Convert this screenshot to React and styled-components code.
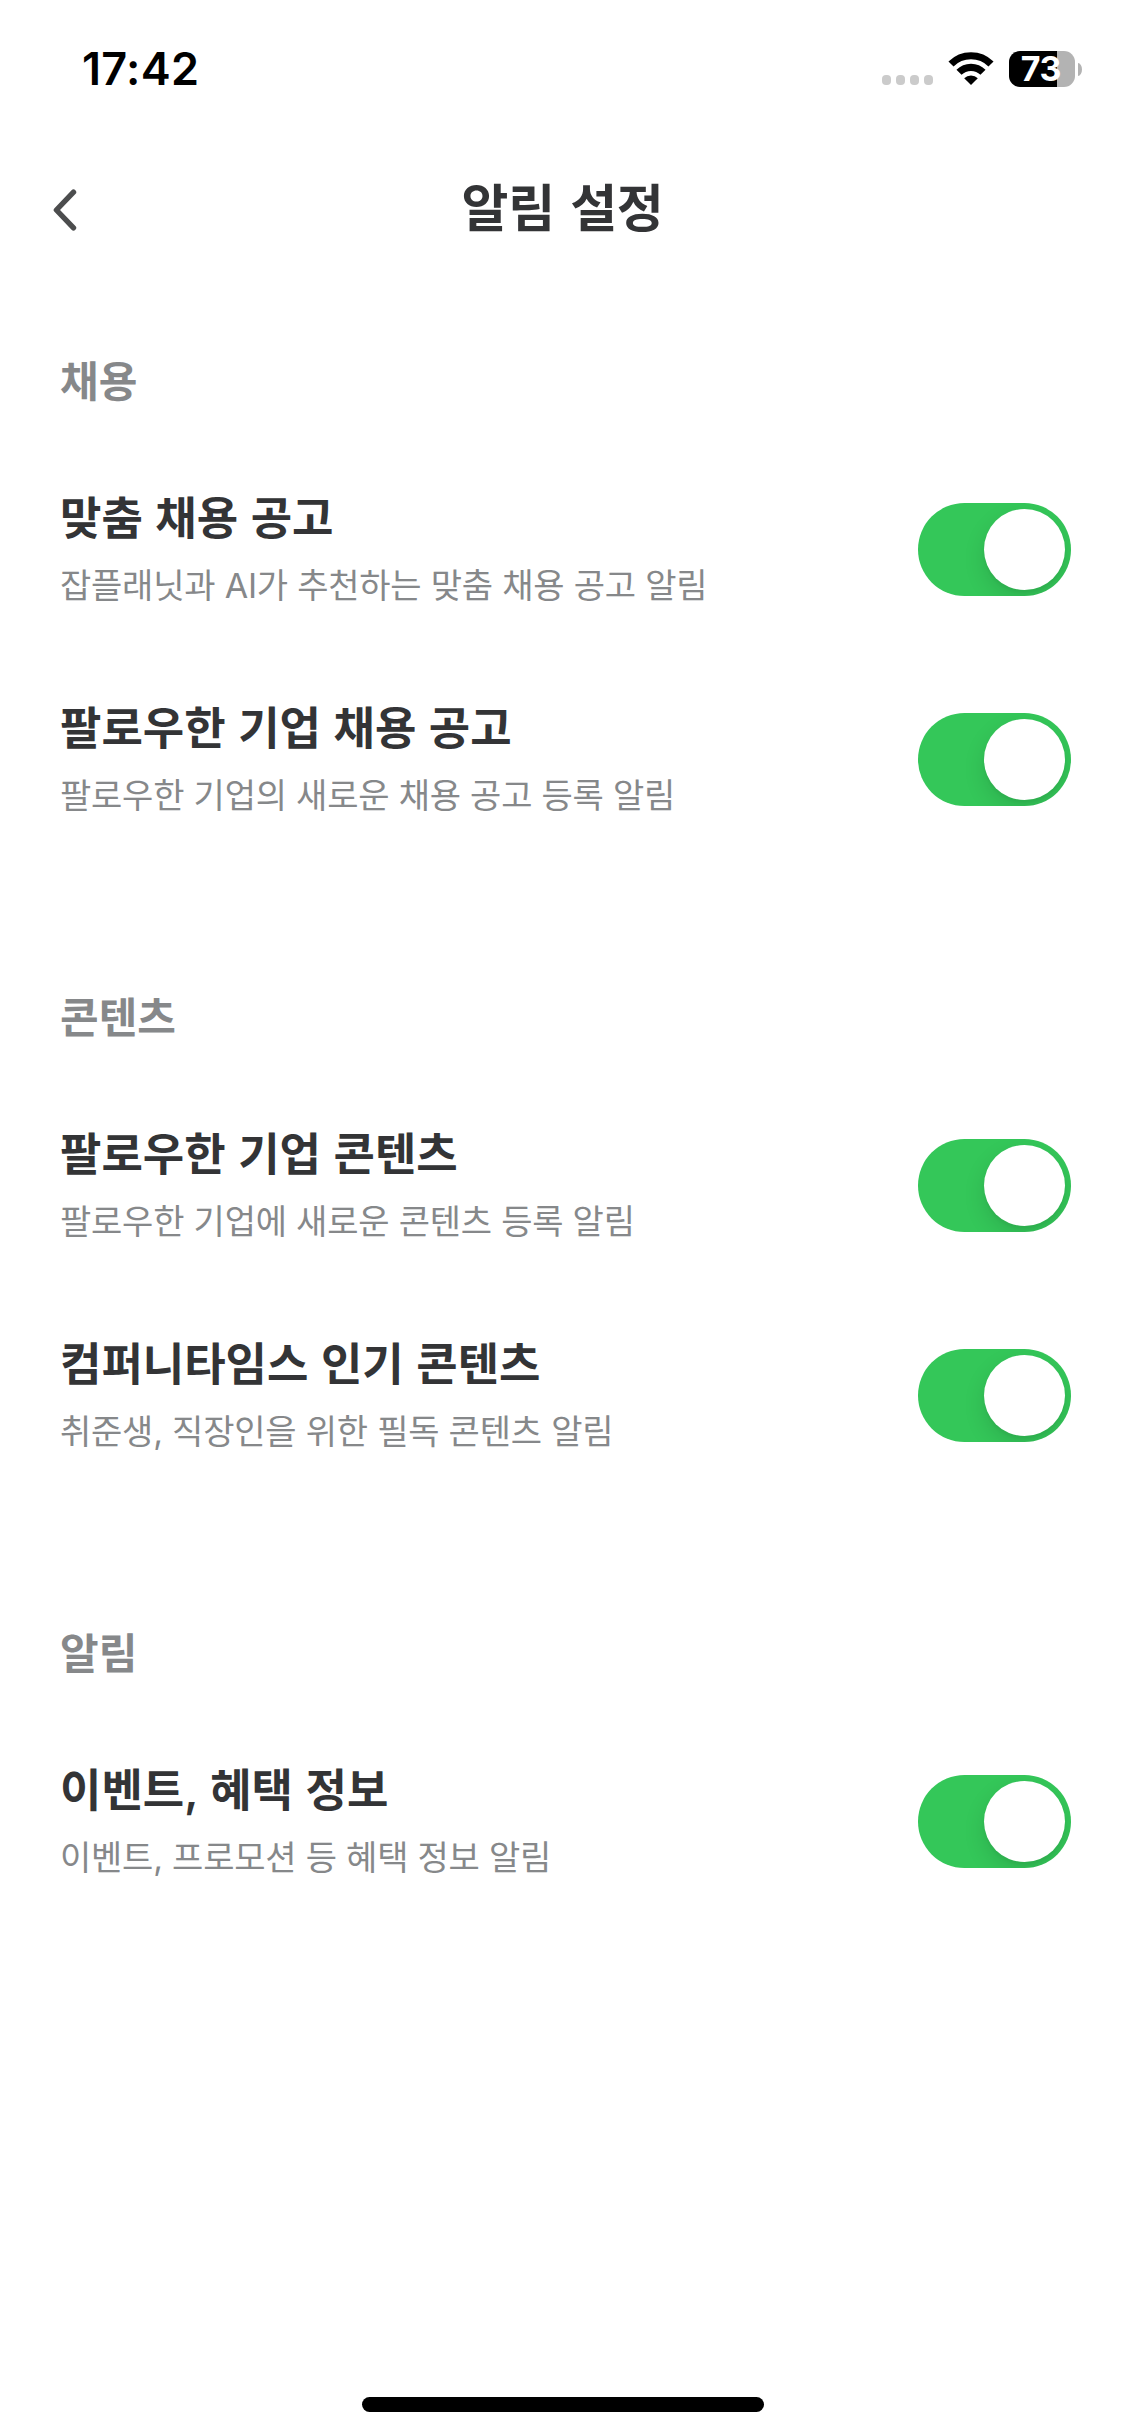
import React, { useState } from "react";
import styled, { createGlobalStyle } from "styled-components";

const GlobalStyle = createGlobalStyle`
  *, *::before, *::after { box-sizing: border-box; }
  body { margin: 0; background: #fff; }
`;

const Screen = styled.div`
  width: 1125px;
  height: 2436px;
  display: flex;
  flex-direction: column;
  background: #fff;
  color: #333436;
  font-family: Inter, "Noto Sans CJK KR", sans-serif;
  overflow: hidden;
`;

const StatusBar = styled.div`
  height: 132px;
  flex: none;
  display: flex;
  justify-content: space-between;
  padding: 0 43px 0 82px;
`;

const Clock = styled.time`
  margin-top: 40px;
  color: #000;
  font-size: 45px;
  line-height: 58px;
  font-weight: 600;
  letter-spacing: 0.3px;
`;

const StatusIcons = styled.div`
  display: flex;
  height: 36px;
  margin-top: 51px;
`;

const SignalDots = styled.div`
  display: flex;
  gap: 5px;
  margin: 24px 15px 0 0;
`;

const Dot = styled.span`
  width: 9px;
  height: 10px;
  border-radius: 4px;
  background: #cbcbcb;
`;

const WifiIcon = styled.svg`
  width: 46px;
  height: 34px;
  margin-right: 15px;
`;

const Battery = styled.div`
  display: flex;
  align-items: center;
  gap: 3px;
`;

const BatteryBody = styled.div`
  width: 66px;
  height: 36px;
  border-radius: 11px;
  display: flex;
  align-items: center;
  justify-content: center;
  background: linear-gradient(90deg, #000 ${(p) => p.$level}%, #b3b3b3 ${(p) => p.$level}%);
  color: #fff;
  font-size: 34px;
  line-height: 36px;
  font-weight: 700;
  letter-spacing: -0.4px;
  padding-right: 2px;
`;

const BatteryCap = styled.span`
  width: 4px;
  height: 13px;
  border-radius: 0 4px 4px 0 / 0 6.5px 6.5px 0;
  background: #b3b3b3;
`;

const Header = styled.header`
  height: 156px;
  flex: none;
  display: grid;
  grid-template-columns: 130px 1fr 130px;
  align-items: center;
`;

const BackButton = styled.button`
  border: 0;
  padding: 0 0 0 50px;
  background: none;
  display: flex;
`;

const HeaderTitle = styled.h1`
  margin: 0 0 2px;
  text-align: center;
  font-size: 51px;
  line-height: 70px;
  font-weight: 700;
  letter-spacing: -0.3px;
  word-spacing: 3.5px;
`;

const Content = styled.main`
  flex: 1;
  display: flex;
  flex-direction: column;
  gap: 124px;
  padding: 64px 54px 0 60px;
`;

const Section = styled.section`
  display: flex;
  flex-direction: column;
`;

const SectionTitle = styled.h2`
  margin: 0 0 32px;
  color: #86888a;
  font-size: 42px;
  line-height: 60px;
  font-weight: 600;
`;

const Row = styled.div`
  height: 210px;
  display: flex;
  align-items: center;
  justify-content: space-between;
`;

const Copy = styled.div`
  display: flex;
  flex-direction: column;
  gap: 13px;
`;

const RowTitle = styled.h3`
  margin: 0;
  font-size: 45px;
  line-height: 60px;
  font-weight: 600;
  word-spacing: 1.2px;
`;

const RowDescription = styled.p`
  margin: 0;
  color: #86888a;
  font-size: 34px;
  line-height: 48px;
  font-weight: 400;
  letter-spacing: -0.22px;
`;

const Switch = styled.button`
  width: 153px;
  height: 93px;
  flex: none;
  border: 0;
  border-radius: 47px;
  padding: 6px;
  display: flex;
  justify-content: ${(p) => (p.$on ? "flex-end" : "flex-start")};
  background: ${(p) => (p.$on ? "#34c759" : "#e9e9ea")};
  overflow: hidden;
`;

const Knob = styled.span`
  width: 81px;
  height: 81px;
  border-radius: 50%;
  background: #fff;
  box-shadow: 0 9px 22px rgba(0, 0, 0, 0.12), 0 3px 3px rgba(0, 0, 0, 0.04);
`;

const HomeArea = styled.footer`
  height: 39px;
  flex: none;
  display: flex;
  justify-content: center;
`;

const HomeIndicator = styled.span`
  width: 402px;
  height: 15px;
  border-radius: 8px;
  background: #000;
`;

const groups = [
  {
    title: "채용",
    items: [
      ["맞춤 채용 공고", "잡플래닛과 AI가 추천하는 맞춤 채용 공고 알림"],
      ["팔로우한 기업 채용 공고", "팔로우한 기업의 새로운 채용 공고 등록 알림"],
    ],
  },
  {
    title: "콘텐츠",
    items: [
      ["팔로우한 기업 콘텐츠", "팔로우한 기업에 새로운 콘텐츠 등록 알림"],
      ["컴퍼니타임스 인기 콘텐츠", "취준생, 직장인을 위한 필독 콘텐츠 알림"],
    ],
  },
  {
    title: "알림",
    items: [["이벤트, 혜택 정보", "이벤트, 프로모션 등 혜택 정보 알림"]],
  },
];

function SettingRow({ title, description }) {
  const [on, setOn] = useState(true);
  return (
    <Row>
      <Copy>
        <RowTitle>{title}</RowTitle>
        <RowDescription>{description}</RowDescription>
      </Copy>
      <Switch $on={on} role="switch" aria-checked={on} aria-label={title} onClick={() => setOn(!on)}>
        <Knob />
      </Switch>
    </Row>
  );
}

export default function App() {
  return (
    <Screen>
      <GlobalStyle />
      <StatusBar>
        <Clock>17:42</Clock>
        <StatusIcons>
          <SignalDots>
            <Dot />
            <Dot />
            <Dot />
            <Dot />
          </SignalDots>
          <WifiIcon viewBox="0 0 46 34" fill="none" stroke="#000" strokeWidth="7.2">
            <path d="M3 13a28.4 28.4 0 0 1 40 0" />
            <path d="M11 21.3a17 17 0 0 1 24 0" />
            <path d="M16.2 27.2a9.6 9.6 0 0 1 13.6 0L23 34z" fill="#000" stroke="none" />
          </WifiIcon>
          <Battery>
            <BatteryBody $level={73}>73</BatteryBody>
            <BatteryCap />
          </Battery>
        </StatusIcons>
      </StatusBar>
      <Header>
        <BackButton aria-label="뒤로">
          <svg width="30" height="42" viewBox="0 0 30 42" fill="none" stroke="#4c4d4e" strokeWidth="5.4" strokeLinecap="round" strokeLinejoin="round">
            <path d="M23.5 3.2 6.4 21l17.1 17.8" />
          </svg>
        </BackButton>
        <HeaderTitle>알림 설정</HeaderTitle>
      </Header>
      <Content>
        {groups.map((group) => (
          <Section key={group.title}>
            <SectionTitle>{group.title}</SectionTitle>
            {group.items.map(([title, description]) => (
              <SettingRow key={title} title={title} description={description} />
            ))}
          </Section>
        ))}
      </Content>
      <HomeArea>
        <HomeIndicator />
      </HomeArea>
    </Screen>
  );
}
